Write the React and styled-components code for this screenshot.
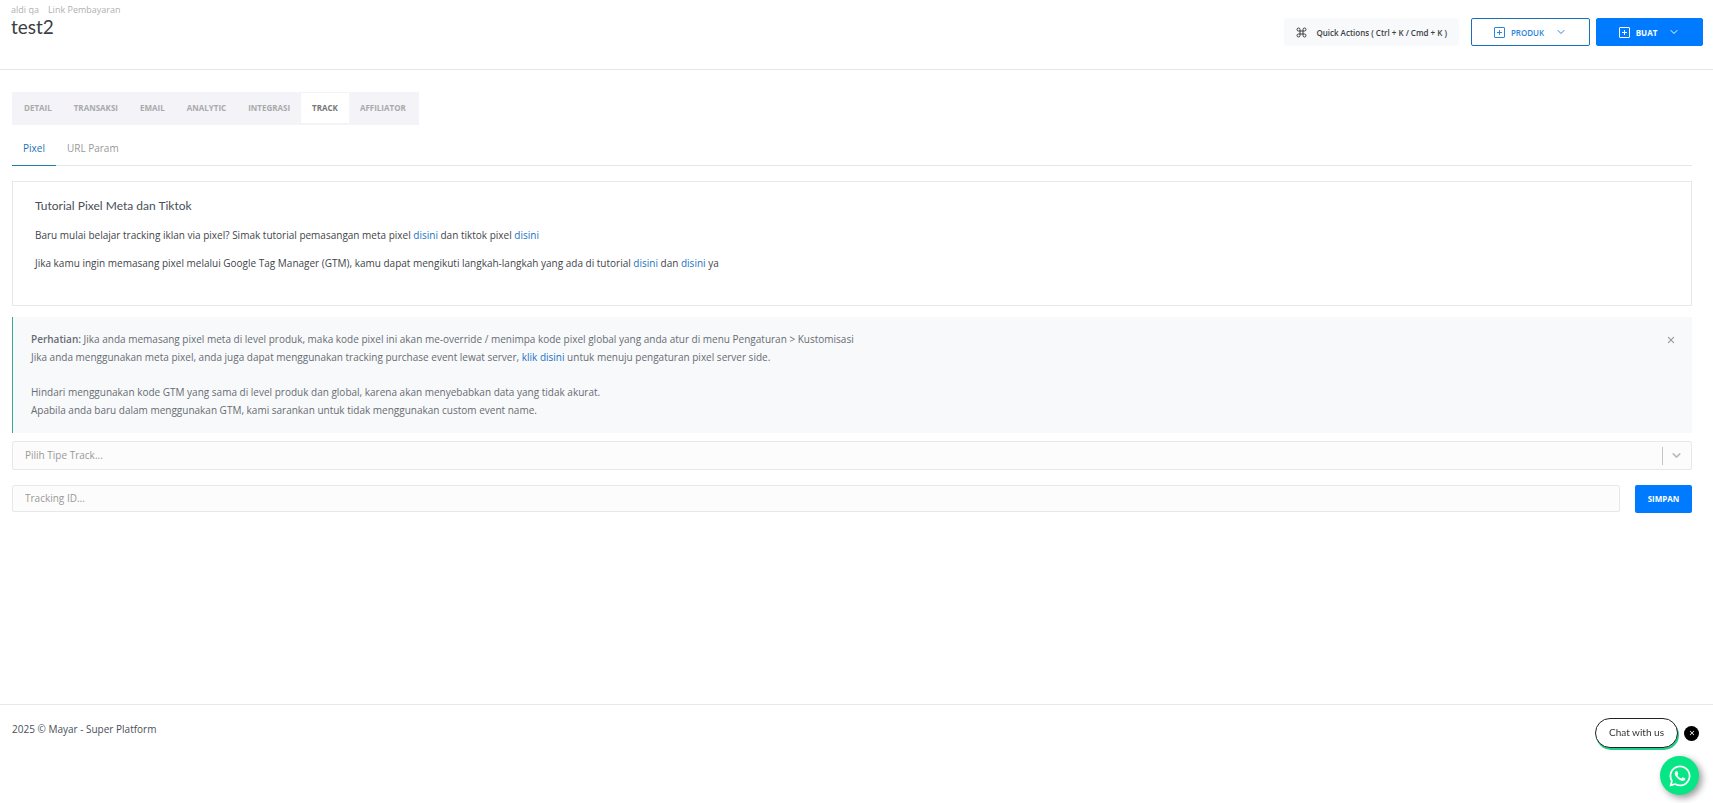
import styled, { createGlobalStyle } from 'styled-components';
import { FiChevronDown } from 'react-icons/fi'
import { FaWhatsapp } from 'react-icons/fa'
import { IoClose } from 'react-icons/io5'

const tabs = ['Detail', 'Transaksi', 'Email', 'Analytic', 'Integrasi', 'Track', 'Affiliator']

const CommandIcon = () => (
  <svg width="11" height="11" viewBox="0 0 22 22" fill="none" stroke="currentColor" strokeWidth="2" aria-hidden="true">
    <path d="M8 8V5A3 3 0 1 0 5 8h12A3 3 0 1 0 14 5v12a3 3 0 1 0 3-3h-12A3 3 0 1 0 8 17z" />
  </svg>
)

const PlusIcon = () => (
  <svg width="11" height="11" viewBox="0 0 11 11" fill="none" stroke="currentColor" aria-hidden="true">
    <rect x="0.5" y="0.5" width="10" height="10" rx="0.5" />
    <path d="M5.5 3v5M3 5.5h5" />
  </svg>
)

const App = () => {
  return (
    <>
      <GlobalStyle />
      <Page>
        <Header>
          <div>
            <Breadcrumb>
              <BreadcrumbLink href="#">aldi qa</BreadcrumbLink>
              <BreadcrumbLink href="#">Link Pembayaran</BreadcrumbLink>
            </Breadcrumb>
            <Title>test2</Title>
          </div>
          <HeaderActions>
            <QuickButton type="button">
              <CommandIcon />
              Quick Actions ( Ctrl + K / Cmd + K )
            </QuickButton>
            <MenuButton type="button" $width={119}>
              <PlusIcon />
              Produk
              <MenuChevron />
            </MenuButton>
            <MenuButton type="button" $width={107} $filled>
              <PlusIcon />
              Buat
              <MenuChevron />
            </MenuButton>
          </HeaderActions>
        </Header>
        <Main>
          <TabBar>
            {tabs.map((tab) => (
              <Tab href="#" key={tab} $active={tab === 'Track'}>{tab}</Tab>
            ))}
          </TabBar>
          <SubTabs>
            <SubTab href="#" $active>Pixel</SubTab>
            <SubTab href="#">URL Param</SubTab>
          </SubTabs>
          <Card>
            <CardTitle>Tutorial Pixel Meta dan Tiktok</CardTitle>
            <CardText>
              Baru mulai belajar tracking iklan via pixel? Simak tutorial pemasangan meta pixel <TextLink href="#">disini</TextLink> dan tiktok pixel <TextLink href="#">disini</TextLink>
            </CardText>
            <CardText>
              Jika kamu ingin memasang pixel melalui Google Tag Manager (GTM), kamu dapat mengikuti langkah-langkah yang ada di tutorial <TextLink href="#">disini</TextLink> dan <TextLink href="#">disini</TextLink> ya
            </CardText>
          </Card>
          <Alert>
            <div>
              <AlertText>
                <strong>Perhatian:</strong> Jika anda memasang pixel meta di level produk, maka kode pixel ini akan me-override / menimpa kode pixel global yang anda atur di menu Pengaturan &gt; Kustomisasi
                <br />
                Jika anda menggunakan meta pixel, anda juga dapat menggunakan tracking purchase event lewat server, <TextLink href="#">klik disini</TextLink> untuk menuju pengaturan pixel server side.
              </AlertText>
              <AlertText>
                Hindari menggunakan kode GTM yang sama di level produk dan global, karena akan menyebabkan data yang tidak akurat.
                <br />
                Apabila anda baru dalam menggunakan GTM, kami sarankan untuk tidak menggunakan custom event name.
              </AlertText>
            </div>
            <AlertClose type="button" aria-label="Tutup">
              <IoClose size={12} />
            </AlertClose>
          </Alert>
          <SelectBox>
            <TypeSelect aria-label="Pilih Tipe Track" defaultValue="">
              <option value="">Pilih Tipe Track...</option>
            </TypeSelect>
            <SelectDivider />
            <FiChevronDown size={13} strokeWidth={3} />
          </SelectBox>
          <FormRow>
            <TrackingInput type="text" aria-label="Tracking ID" placeholder="Tracking ID..." />
            <SaveButton type="submit">Simpan</SaveButton>
          </FormRow>
        </Main>
        <Footer>2025 © Mayar - Super Platform</Footer>
      </Page>
      <ChatWidget>
        <ChatRow>
          <ChatLabel type="button">Chat with us</ChatLabel>
          <ChatClose type="button" aria-label="Tutup chat"><IoClose size={8} /></ChatClose>
        </ChatRow>
        <ChatButton type="button" aria-label="WhatsApp"><FaWhatsapp size={24} /></ChatButton>
      </ChatWidget>
    </>
  );
}

const GlobalStyle = createGlobalStyle`
  * {
    box-sizing: border-box;
  }
  body {
    margin: 0;
    background: #fff;
    color: #495057;
    font-family: 'Open Sans', sans-serif;
    font-size: 10px;
  }
  button, input, select {
    font-family: inherit;
    font-size: 10px;
  }
  a {
    text-decoration: none;
  }
`
const Page = styled.div`
  min-height: 100vh;
  display: flex;
  flex-direction: column;
`
const Header = styled.header`
  display: flex;
  justify-content: space-between;
  align-items: flex-start;
  height: 70px;
  padding: 2px 10px 0 11px;
  border-bottom: 1px solid #e4e7e9;
`
const Breadcrumb = styled.nav`
  display: flex;
  gap: 9px;
  font-size: 9px;
  line-height: 15px;
`
const BreadcrumbLink = styled.a`
  color: #b0b0b0;
`
const Title = styled.h1`
  margin: 0;
  font-family: Lato, sans-serif;
  font-size: 19px;
  font-weight: 400;
  line-height: 20px;
  color: #3b4044;
`
const HeaderActions = styled.div`
  display: flex;
  padding-top: 16px;
`
const QuickButton = styled.button`
  display: flex;
  align-items: center;
  gap: 9px;
  height: 28px;
  margin-right: 12px;
  padding: 0 12px;
  border: 0;
  border-radius: 3px;
  background: #f8f9fa;
  color: #3b4044;
  font-size: 8px;
  font-weight: 600;
`
const MenuButton = styled.button`
  display: flex;
  align-items: center;
  justify-content: center;
  gap: 6px;
  width: ${(props) => props.$width}px;
  height: 28px;
  padding: 0;
  border: 1px solid #007bff;
  border-color: ${(props) => (props.$filled ? '#007bff' : '#1a6fb5')};
  border-radius: 2px;
  background: ${(props) => (props.$filled ? '#007bff' : '#fff')};
  color: ${(props) => (props.$filled ? '#fff' : '#2b86da')};
  font-size: 8px;
  font-weight: ${(props) => (props.$filled ? 700 : 600)};
  text-transform: uppercase;
  & + & {
    margin-left: 6px;
  }
`
const MenuChevron = styled(FiChevronDown)`
  width: 12px;
  height: 12px;
  margin-left: 5px;
`
const Main = styled.main`
  flex: 1;
  padding: 22px 21px 0 12px;
`
const TabBar = styled.nav`
  display: inline-flex;
  padding: 1px 2px 2px 1px;
  background: #f3f3f8;
  vertical-align: top;
`
const Tab = styled.a`
  padding: 0 11px;
  background: ${(props) => (props.$active ? '#fff' : 'transparent')};
  color: ${(props) => (props.$active ? '#777' : '#aaa')};
  font-size: 8px;
  font-weight: 700;
  line-height: 30px;
  text-transform: uppercase;
`
const SubTabs = styled.nav`
  display: flex;
  margin-top: 8px;
  border-bottom: 1px solid #e4e7e9;
`
const SubTab = styled.a`
  height: 33px;
  margin-bottom: -1px;
  padding: 0 11px;
  border-bottom: 1px solid ${(props) => (props.$active ? '#1e7fa8' : 'transparent')};
  color: ${(props) => (props.$active ? '#1873b4' : '#999')};
  line-height: 30px;
`
const Card = styled.section`
  height: 125px;
  margin-top: 15px;
  padding: 16px 22px;
  border: 1px solid #e6e8ea;
`
const CardTitle = styled.h2`
  margin: 0 0 13px;
  font-family: Lato, sans-serif;
  font-size: 12px;
  font-weight: 400;
  line-height: 16px;
`
const CardText = styled.p`
  margin: 0 0 12px;
  color: #3f454a;
  line-height: 16px;
`
const TextLink = styled.a`
  color: #1873c4;
`
const Alert = styled.div`
  display: flex;
  justify-content: space-between;
  align-items: flex-start;
  height: 116px;
  margin-top: 11px;
  padding: 13px 15px 0 18px;
  border-left: 1px solid #3aa597;
  background: #f8f9fb;
`
const AlertText = styled.p`
  margin: 0 0 17px;
  color: #676c72;
  line-height: 18px;
  strong {
    font-weight: 600;
  }
`
const AlertClose = styled.button`
  display: flex;
  margin-top: 4px;
  padding: 0;
  border: 0;
  background: none;
  color: #999;
`
const SelectBox = styled.div`
  display: flex;
  align-items: center;
  height: 29px;
  margin-top: 8px;
  padding-right: 8px;
  border: 1px solid #e6e8ea;
  border-radius: 2px;
  background: #fcfcfc;
  color: #bbb;
`
const TypeSelect = styled.select`
  flex: 1;
  height: 27px;
  padding: 0 12px 2px;
  border: 0;
  appearance: none;
  background: none;
  color: #999;
`
const SelectDivider = styled.span`
  width: 1px;
  height: 18px;
  margin-right: 7px;
  background: #c4c4c4;
`
const FormRow = styled.form`
  display: flex;
  align-items: flex-start;
  gap: 15px;
  margin-top: 15px;
`
const TrackingInput = styled.input`
  flex: 1;
  height: 27px;
  padding: 0 12px 2px;
  border: 1px solid #e6e8ea;
  border-radius: 2px;
  background: #fcfcfc;
  &::placeholder {
    color: #999;
  }
`
const SaveButton = styled.button`
  width: 57px;
  height: 28px;
  padding: 0 0 2px;
  border: 0;
  border-radius: 2px;
  background: #007bff;
  color: #fff;
  font-size: 8px;
  font-weight: 700;
  text-transform: uppercase;
`
const Footer = styled.footer`
  height: 99px;
  padding: 15px 12px;
  border-top: 1px solid #e6e8ea;
  line-height: 18px;
`
// Chat
const ChatWidget = styled.div`
  position: fixed;
  right: 14px;
  bottom: 8px;
  display: flex;
  flex-direction: column;
  align-items: flex-end;
  gap: 8px;
`
const ChatRow = styled.div`
  display: flex;
  align-items: center;
  gap: 6px;
`
const ChatLabel = styled.button`
  width: 83px;
  height: 30px;
  padding: 0 0 2px;
  border: 1px solid #222;
  border-radius: 15px;
  background: #fff;
  box-shadow: 1px 2px 0 #1fcf86;
  color: #333;
  font-family: Lato, sans-serif;
`
const ChatClose = styled.button`
  display: flex;
  align-items: center;
  justify-content: center;
  width: 15px;
  height: 15px;
  padding: 0;
  border: 0;
  border-radius: 50%;
  background: #000;
  color: #fff;
`
const ChatButton = styled.button`
  display: flex;
  align-items: center;
  justify-content: center;
  width: 39px;
  height: 39px;
  padding: 0;
  border: 0;
  border-radius: 50%;
  background: #06e684;
  box-shadow: 3px 3px 7px rgba(0, 0, 0, 0.4);
  color: #fff;
`
export default App;
